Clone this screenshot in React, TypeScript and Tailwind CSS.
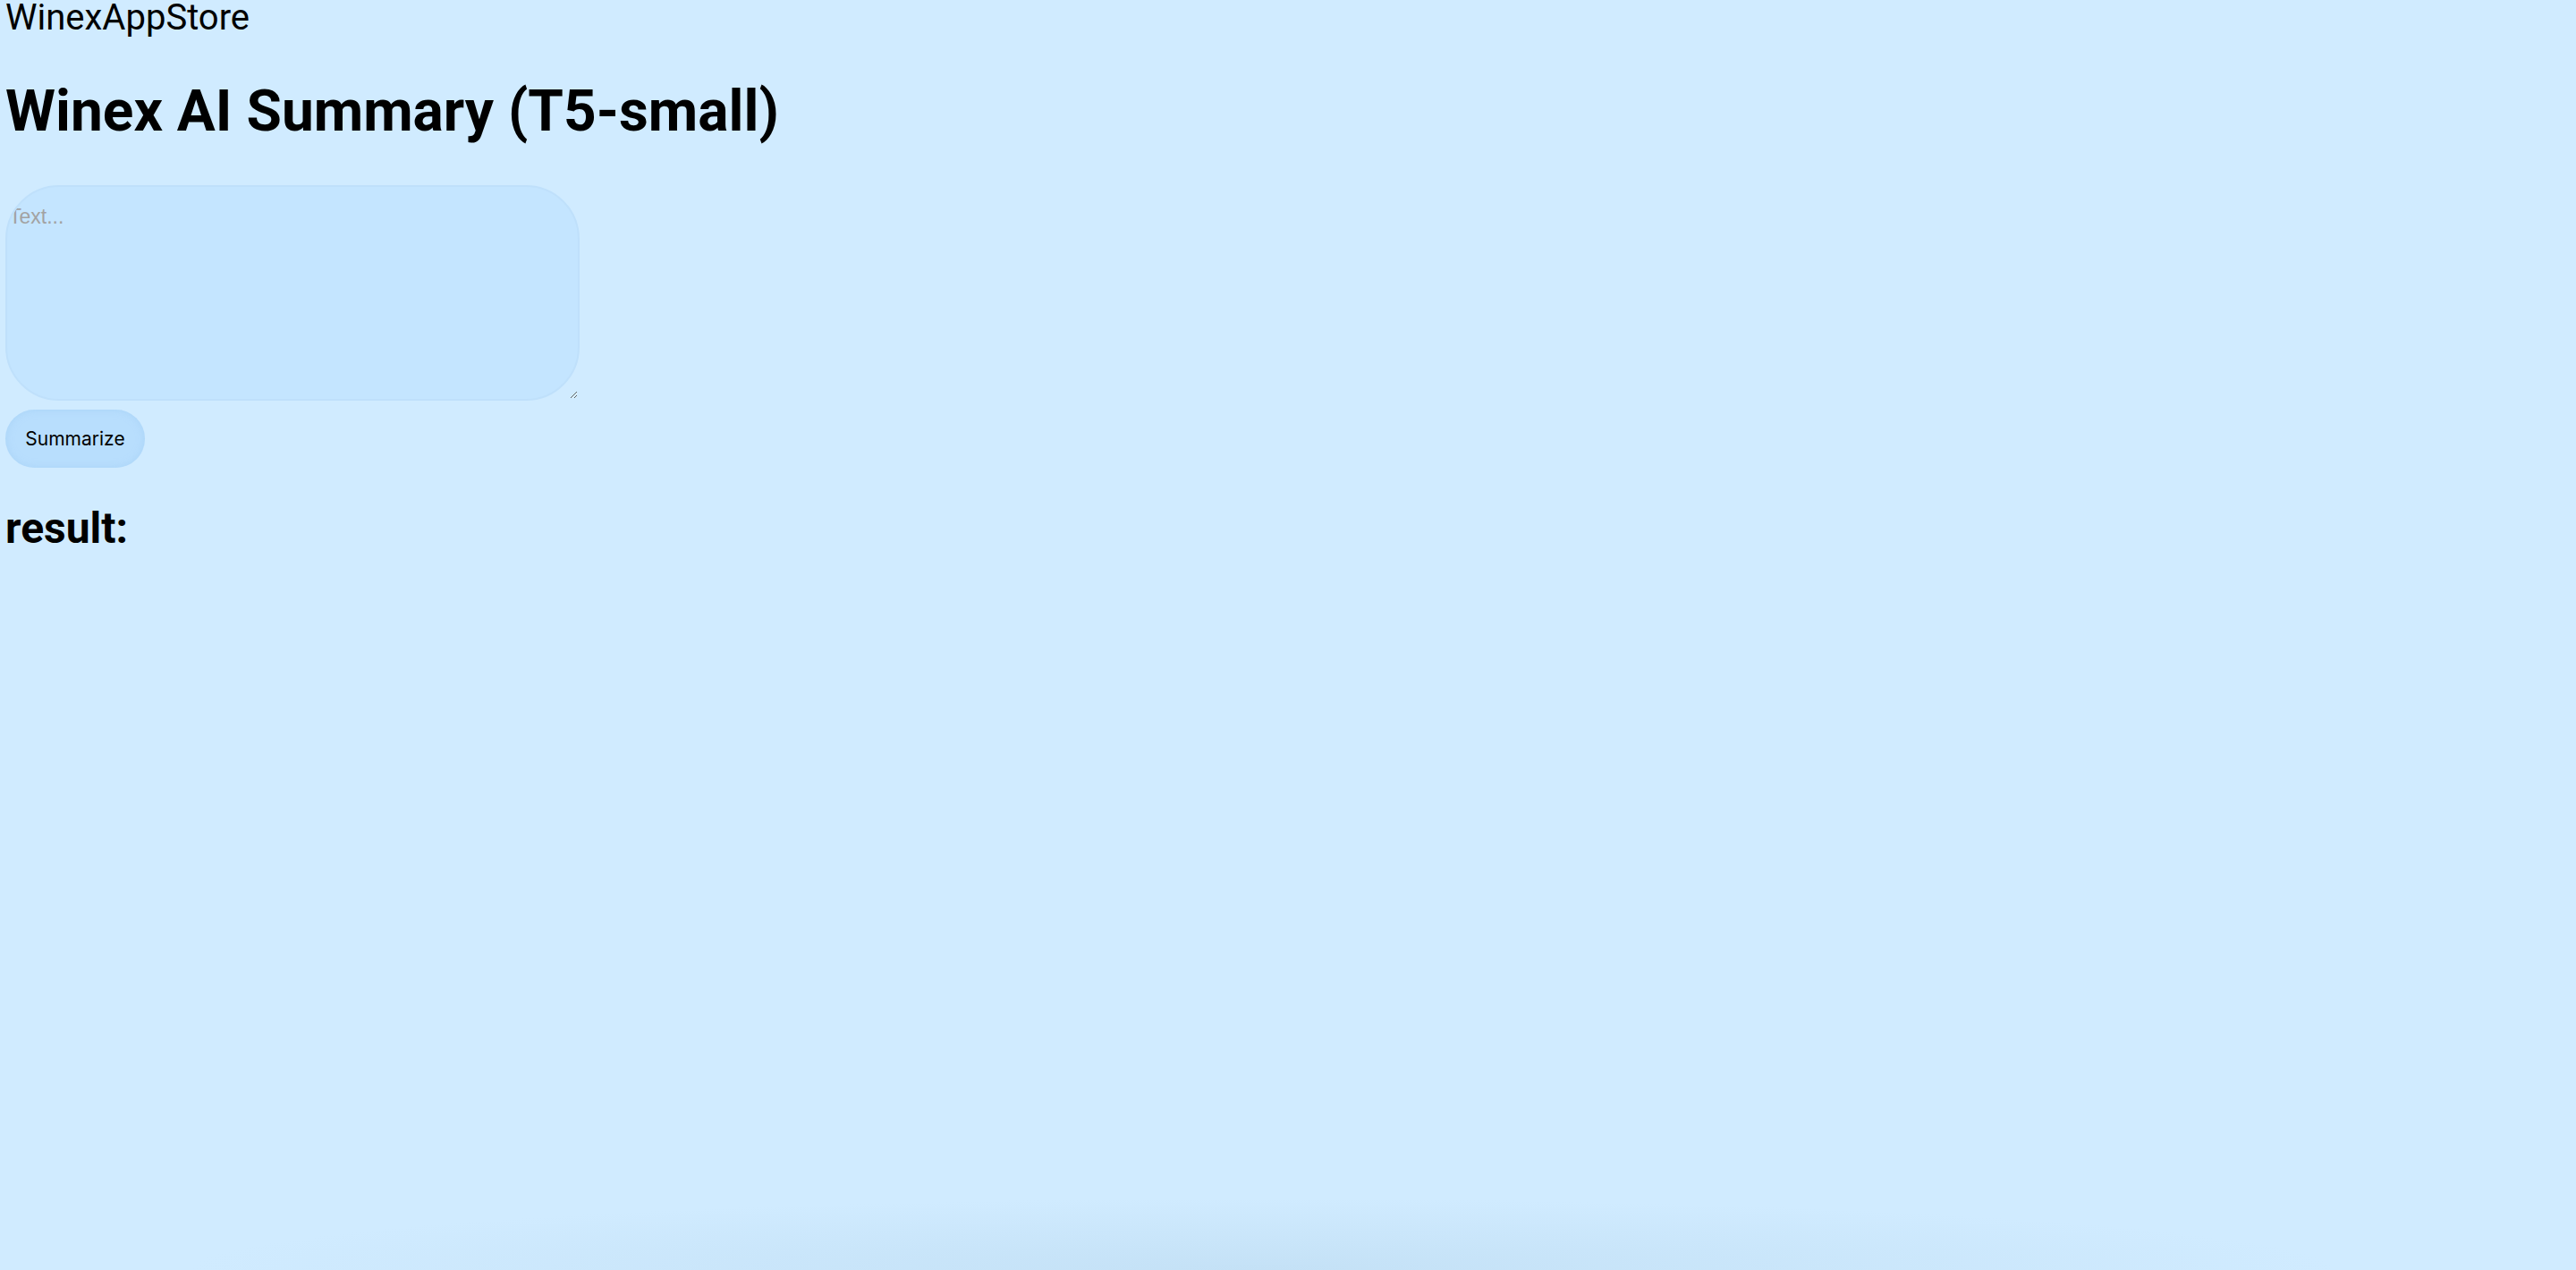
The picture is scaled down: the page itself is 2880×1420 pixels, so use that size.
import { useState } from 'react';

export default function App() {
  const [text, setText] = useState('');
  const [result, setResult] = useState('');

  return (
    <div className="min-h-screen bg-[#d0ebff] bg-[radial-gradient(ellipse_1200px_80px_at_49%_100%,#c4e1f6,#d0ebff00)] pl-[6px] text-black font-['Roboto',sans-serif]">
      <div className="text-[40px] leading-[40px]">WinexAppStore</div>

      <h1 className="mt-[45px] text-[64px] leading-[80px] font-bold">Winex AI Summary (T5-small)</h1>

      {/* Input */}
      <textarea
        value={text}
        onChange={(e) => setText(e.target.value)}
        placeholder="Text..."
        className="mt-[42px] block w-[642px] h-[241px] rounded-[60px] border-2 border-[#bfe0fb] bg-[#c4e5ff] px-[2px] pt-[18px] pb-[8px] text-[23px] leading-[30px] font-['Liberation_Sans',sans-serif] placeholder:text-[#a2a2a2] outline-none"
      />

      <button
        onClick={() => setResult(text.slice(0, 120))}
        className="mt-[10px] block h-[65px] w-[156px] rounded-full bg-[#b8defd] shadow-[inset_0_0_8px_rgba(160,205,245,0.6)] text-[21px] font-['Inter',sans-serif] text-black"
      >
        Summarize
      </button>

      <h2 className="mt-[40px] text-[48px] leading-[56px] font-bold">result:</h2>
      {result && <p className="text-[21px] mt-2">{result}</p>}
    </div>
  );
}
